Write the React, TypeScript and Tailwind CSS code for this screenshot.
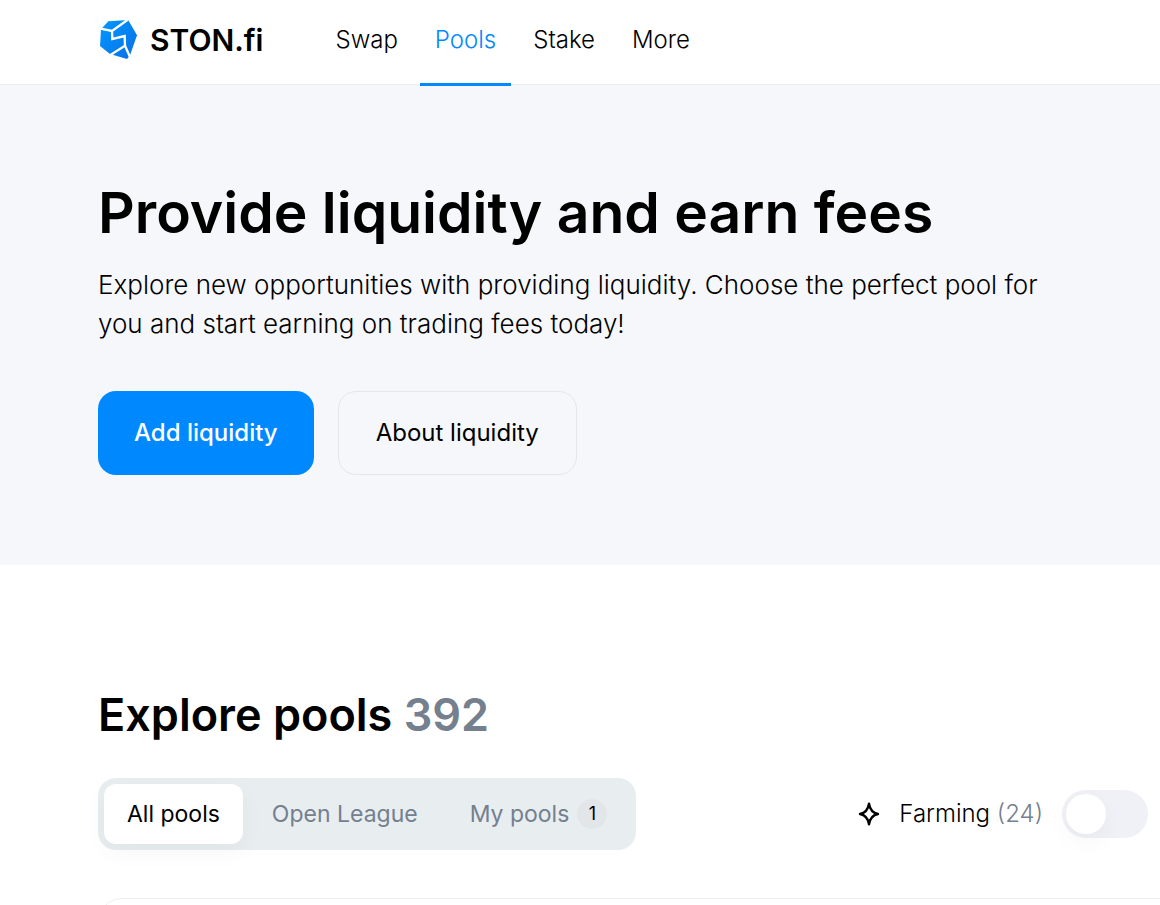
import { useState } from "react";

const navItems = ["Swap", "Pools", "Stake", "More"];

const tabs = [
  { label: "All pools" },
  { label: "Open League" },
  { label: "My pools", count: 1 },
];

function Logo() {
  return (
    <svg viewBox="0 0 120 120" className="size-10" aria-hidden="true">
      <defs>
        <linearGradient id="stone" x1="0" y1="0" x2="1" y2="1">
          <stop offset="0" stopColor="#0098ff" />
          <stop offset="1" stopColor="#0a6fe6" />
        </linearGradient>
      </defs>
      <path d="M31 4L80 1L92 2L117 46L96 106L87 117L36 102L6 78L9 28Z" fill="url(#stone)" />
      <path
        d="M4 25L42 33L88 0M42 33L43 57L80 48L81 77L36 106M81 77L99 118"
        fill="none"
        stroke="#fff"
        strokeWidth="7"
      />
    </svg>
  );
}

function Sparkle() {
  return (
    <svg viewBox="0 0 24 24" className="size-6" aria-hidden="true">
      <path
        d="M12 1.800C13 8 15.500 11 21 12C15.500 13 13 16 12 22.200C11 16 8.500 13 3 12C8.500 11 11 8 12 1.800Z"
        fill="none"
        stroke="#000"
        strokeWidth="2.400"
        strokeLinejoin="round"
      />
    </svg>
  );
}

export default function App() {
  const [tab, setTab] = useState("All pools");
  const [farming, setFarming] = useState(false);

  return (
    <div className="overflow-x-hidden bg-white font-['Inter',sans-serif] text-black">
      <header className="flex h-[85px] border-b border-[#e9ebee] pl-[98px]">
        <a href="#home" className="flex h-20 items-center gap-3">
          <Logo />
          <span className="text-[30px] leading-9 font-semibold">STON.fi</span>
        </a>
        <nav className="ml-[57px] flex gap-[7px]">
          {navItems.map((item) => (
            <a
              key={item}
              href={`#${item.toLowerCase()}`}
              className={
                item === "Pools"
                  ? "relative h-20 px-[15px] text-2xl leading-[80px] font-light text-[#0088ff] after:absolute after:inset-x-0 after:top-[83px] after:h-[3px] after:bg-[#0088ff]"
                  : "h-20 px-[15px] text-2xl leading-[80px] font-light"
              }
            >
              {item}
            </a>
          ))}
        </nav>
      </header>

      <main>
        <section className="bg-[#f5f7fa] px-[98px] pt-[92px] pb-[90px]">
          <h1 className="text-[57px] leading-[72px] font-semibold">Provide liquidity and earn fees</h1>
          <p className="mt-4 text-[26px] leading-[39px] font-light">
            Explore new opportunities with providing liquidity. Choose the perfect pool for you and start earning on
            trading fees today!
          </p>
          <div className="mt-12 flex gap-6">
            <button type="button" className="h-[84px] rounded-[18px] bg-[#0088ff] px-9 text-2xl font-medium text-white">
              Add liquidity
            </button>
            <button type="button" className="h-[84px] rounded-[18px] border border-[#e4e6ea] px-[37px] text-2xl">
              About liquidity
            </button>
          </div>
        </section>

        <section className="pt-[120px] pr-3 pl-[98px]">
          <h2 className="text-[45px] leading-[60px] font-semibold">
            Explore pools <span className="text-[#74808e]">392</span>
          </h2>
          <div className="mt-[33px] flex items-center justify-between">
            <div role="tablist" className="flex gap-1.5 rounded-[18px] bg-[#e8edf0] p-1.5">
              {tabs.map(({ label, count }) => (
                <button
                  key={label}
                  type="button"
                  role="tab"
                  aria-selected={tab === label}
                  onClick={() => setTab(label)}
                  className={
                    tab === label
                      ? "flex h-[60px] items-center gap-2 rounded-xl bg-white px-[23px] text-[23px] shadow-[0_8px_24px_rgba(0,0,0,0.04)]"
                      : "flex h-[60px] items-center gap-2 rounded-xl px-[23px] text-[23px] text-[#74808e]"
                  }
                >
                  {label}
                  {count && (
                    <span className="flex size-[30px] items-center justify-center rounded-full bg-[#e3e6e9] text-lg text-black">
                      {count}
                    </span>
                  )}
                </button>
              ))}
            </div>
            <label className="flex cursor-pointer items-center text-2xl font-light">
              <Sparkle />
              <span className="ml-[18px]">
                Farming <span className="text-[#74808e]">(24)</span>
              </span>
              <input
                type="checkbox"
                role="switch"
                checked={farming}
                onChange={(e) => setFarming(e.target.checked)}
                className="peer sr-only"
              />
              <span className="ml-[19px] flex h-12 w-[86px] items-center rounded-full bg-[#eff1f6] px-1 peer-checked:justify-end peer-checked:bg-[#0088ff]">
                <span className="size-10 rounded-full bg-white shadow-[0_8px_24px_rgba(0,0,0,0.04)]" />
              </span>
            </label>
          </div>
          <div className="mt-12 -mr-8 h-[7px] overflow-hidden">
            <div className="h-24 rounded-[24px] border border-[#eceef0]" />
          </div>
        </section>
      </main>
    </div>
  );
}
